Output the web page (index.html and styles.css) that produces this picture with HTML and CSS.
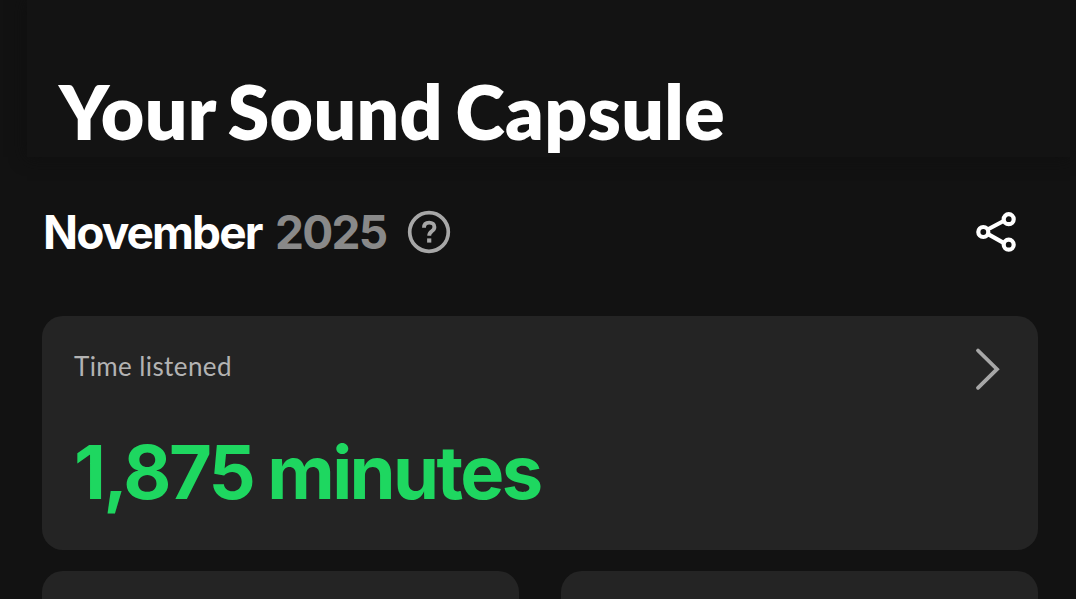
FILE: index.html
```html
<!DOCTYPE html>
<html lang="en">
<head>
    <meta charset="UTF-8">
    <meta name="viewport" content="width=device-width, initial-scale=1.0">
    <title>Your Sound Capsule</title>
    <link rel="stylesheet" href="styles.css">
</head>
<body>

<header class="page-header">
    <h1>Your Sound Capsule</h1>
</header>

<main>
    <div class="month-row">
        <h2>November</h2>
        <span class="year">2025</span>
        <button class="help" aria-label="Help">
            <svg width="44" height="44" viewBox="0 0 44 44" fill="none">
                <circle cx="22" cy="22" r="19.3" stroke="#a7a7a7" stroke-width="3.7"/>
                <path d="M17 17.8c0-3.6 2.2-5.2 5.2-5.2 3.1 0 5.2 1.8 5.2 4.3 0 2.3-1.1 3.2-2.7 4.4-1.7 1.2-2.5 2.1-2.5 4.5" stroke="#a7a7a7" stroke-width="3.9"/>
                <path d="M20.1 28.4h4.2v4.2h-4.2z" fill="#a7a7a7"/>
            </svg>
        </button>
        <button class="share" aria-label="Share">
            <svg width="42" height="42" viewBox="0 0 42 42" fill="none" stroke="#fff" stroke-width="4.2">
                <path d="M12.6 18.5L28.6 10M12.6 22.8L28.6 31.8"/>
                <circle cx="8.3" cy="21" r="5"/>
                <circle cx="33.7" cy="8.2" r="5"/>
                <circle cx="33.7" cy="33.7" r="5"/>
            </svg>
        </button>
    </div>

    <section class="card time-card">
        <div class="card-top">
            <span class="label">Time listened</span>
            <svg class="chevron" width="28" height="46" viewBox="0 0 28 46" fill="none">
                <path d="M4 4.5L23 23.2L4 41.8" stroke="#a7a7a7" stroke-width="3.8" stroke-linecap="round"/>
            </svg>
        </div>
        <p class="minutes">1,875 minutes</p>
    </section>

    <div class="card-grid">
        <div class="card"></div>
        <div class="card"></div>
    </div>
</main>

</body>
</html>
```
FILE: styles.css
```css
* {
    box-sizing: border-box;
}

body {
    margin: 0;
    height: 599px;
    overflow: hidden;
    background-color: #121212;
    color: #fff;
    font-family: Inter, Arial, sans-serif;
}

h1, h2, p {
    margin: 0;
    white-space: nowrap;
}

button {
    padding: 0;
    border: none;
    background: none;
}

svg {
    display: block;
}

.page-header {
    height: 157px;
    margin: 0 6px 0 27px;
    padding: 66px 0 0 32px;
    background-color: #131313;
    box-shadow: 0 0 16px #0f0f0f;
}

.page-header h1 {
    font-family: Lato, sans-serif;
    font-size: 75px;
    font-weight: 800;
    line-height: 90px;
    letter-spacing: 0.3px;
    word-spacing: -5px;
}

main {
    padding: 0 38px 0 42px;
}

.month-row {
    display: flex;
    align-items: center;
    height: 150px;
    font-size: 46px;
    font-weight: bold;
}

.month-row h2 {
    width: 232px;
    margin-left: 1px;
    font-size: 46px;
    letter-spacing: -1.9px;
}

.year {
    width: 132px;
    color: #898989;
    letter-spacing: -1.7px;
}

.share {
    margin-left: auto;
    margin-right: 21px;
}

.card {
    background-color: #242424;
    border-radius: 21px;
}

.time-card {
    height: 234px;
    margin-top: 9px;
    padding: 30px 32px;
}

.card-top {
    display: flex;
    justify-content: space-between;
    height: 83px;
    padding-right: 4px;
}

.label {
    color: #b3b3b3;
    font-family: Lato, sans-serif;
    font-size: 26px;
    line-height: 40px;
    letter-spacing: 0.4px;
}

.minutes {
    color: #1ed760;
    font-size: 74px;
    font-weight: 700;
    line-height: 86px;
    letter-spacing: -2.6px;
    word-spacing: -1px;
}

.card-grid {
    display: grid;
    grid-template-columns: 1fr 1fr;
    gap: 42px;
    margin-top: 21px;
}

.card-grid .card {
    height: 28px;
    border-radius: 21px 21px 0 0;
}
```
